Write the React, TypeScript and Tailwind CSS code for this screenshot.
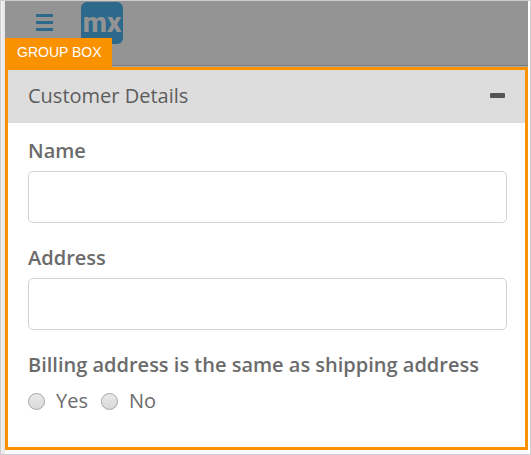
import { useState } from "react";

function MxLogo() {
  return (
    <div className="flex h-[42px] w-[42px] items-center justify-center rounded-md bg-[#2c698a] pb-px font-['Roboto',sans-serif] text-[28px] leading-none font-extrabold text-[#949494]">
      mx
    </div>
  );
}

function TopBar() {
  return (
    <header className="flex h-[65px] items-start gap-7 border-b border-[#7c7c7c] bg-[#949494] pt-px pl-[31px]">
      <button type="button" aria-label="Menu" className="mt-3 flex w-[17px] flex-col gap-1">
        <span className="h-[3px] bg-[#2c698a]" />
        <span className="h-[3px] bg-[#2c698a]" />
        <span className="h-[3px] bg-[#2c698a]" />
      </button>
      <MxLogo />
    </header>
  );
}

function TextField({ id, label }: { id: string; label: string }) {
  return (
    <div className="flex flex-col gap-[6px]">
      <label htmlFor={id} className="leading-7 font-semibold">
        {label}
      </label>
      <input
        id={id}
        type="text"
        className="h-[52px] w-full rounded-[5px] border border-[#d2d2d2] bg-white px-3 outline-none"
      />
    </div>
  );
}

function RadioOption({ label }: { label: string }) {
  return (
    <label className="flex items-center gap-[11px] leading-7">
      <input
        type="radio"
        name="same-address"
        className="h-[17px] w-[17px] appearance-none rounded-full border border-[#a5a5a5] bg-linear-to-b from-[#e9e9e9] to-[#d9d9d9] checked:border-4"
      />
      {label}
    </label>
  );
}

export default function App() {
  const [open, setOpen] = useState(true);
  return (
    <div className="border border-[#cdcdcd] bg-linear-to-r from-[#f4f4f4] to-[#e4e4e4] to-[4px] pl-1 font-['Open_Sans',sans-serif] text-xl text-[#6b6b6b]">
      <div className="bg-white pr-[2px] pb-1">
        <TopBar />
        <div className="h-px bg-[#a9a9a9]" />
        <section className="relative border-3 border-[#fa9200]">
          <div className="absolute -top-8 -left-[3px] flex h-[29px] items-center bg-[#fa9200] pr-[10px] pb-px pl-3 font-['Liberation_Sans',sans-serif] text-sm text-white">
            GROUP BOX
          </div>
          <button
            type="button"
            aria-expanded={open}
            onClick={() => setOpen(!open)}
            className="flex h-[53px] w-full items-center justify-between bg-[#dddddd] pr-5 pb-[2px] pl-5 text-[#5c5c5c]"
          >
            <span>Customer Details</span>
            <span className="h-[5px] w-[15px] rounded-[1px] bg-[#555555]" />
          </button>
          {open && (
            <form className="flex flex-col gap-[21px] pt-[14px] pr-[18px] pb-8 pl-5">
              <TextField id="name" label="Name" />
              <TextField id="address" label="Address" />
              <fieldset className="flex flex-col">
                <legend className="mb-2 leading-7 font-semibold">
                  Billing address is the same as shipping address
                </legend>
                <div className="flex gap-[13px]">
                  <RadioOption label="Yes" />
                  <RadioOption label="No" />
                </div>
              </fieldset>
            </form>
          )}
        </section>
      </div>
    </div>
  );
}
